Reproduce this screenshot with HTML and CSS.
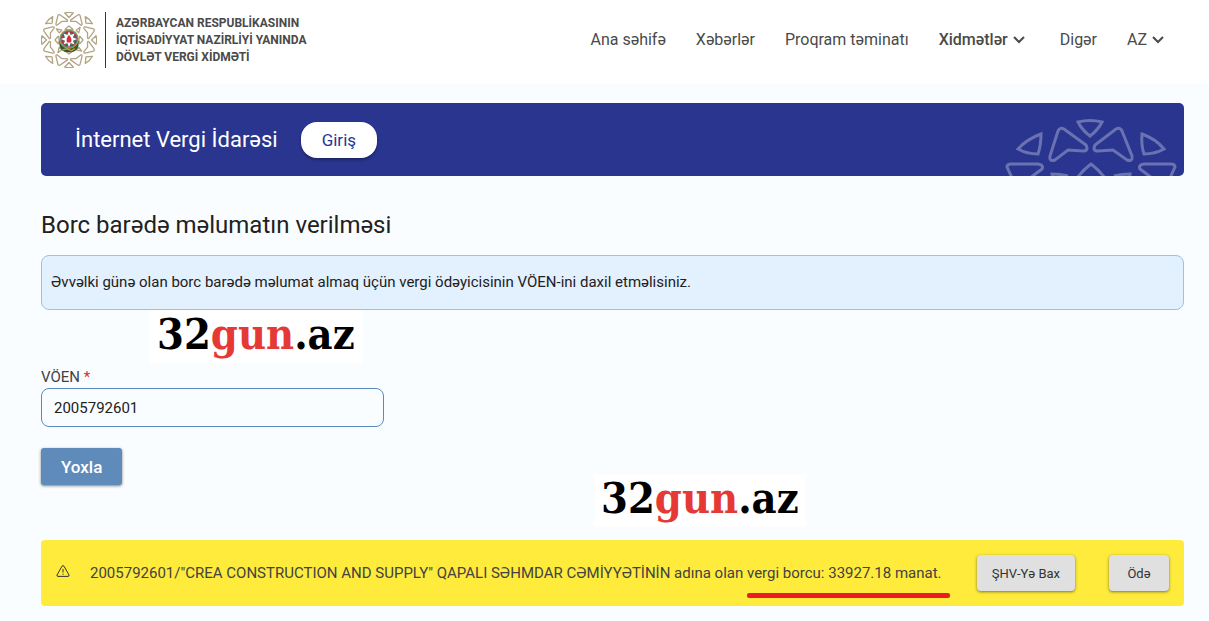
FILE: index.html
```
<!DOCTYPE html>
<html lang="az">

<head>
    <meta charset="UTF-8">
    <meta name="viewport" content="width=device-width, initial-scale=1.0">
    <title>Borc barədə məlumatın verilməsi</title>
    <link rel="stylesheet" href="styles.css">
</head>

<body>
    <header class="header">
        <a href="#" class="logo">
            <svg class="emblem" viewBox="-86 -86 172 172" aria-hidden="true">
                <defs>
                    <g id="quarter">
                        <path d="M-13-83Q0-87 13-83L0-69Z" />
                        <path d="M-34-75Q-31-80-26-76L-5-61Q-3-57-8-57L-22-57L-36-46Q-41-44-40-50Z" />
                        <path d="M34-75Q31-80 26-76L5-61Q3-57 8-57L22-57L36-46Q41-44 40-50Z" />
                        <path d="M-50-72L-52-52L-72-50Q-65-64-50-72Z" />
                        <path d="M0-43L-12-33L0-30L12-33Z" />
                        <path d="M-39-34L-22-30L-30-22Z" />
                    </g>
                </defs>
                <g fill="none" stroke="#b0a482" stroke-width="4" stroke-linejoin="round">
                    <use href="#quarter" />
                    <use href="#quarter" transform="rotate(90)" />
                    <use href="#quarter" transform="rotate(180)" />
                    <use href="#quarter" transform="rotate(270)" />
                </g>
                <path d="M-30 2Q-32 38 0 38Q32 38 30 2Z" fill="#2f5a2c" />
                <path d="M-20 30L-6 27L8 33L18 26" fill="none" stroke="#c9a13b" stroke-width="4" />
                <circle cy="-3" r="30" fill="#b99a42" />
                <circle cy="-3" r="27" fill="#3c8fae" />
                <circle cy="-3" r="24" fill="#c6283c" />
                <circle cy="-3" r="20" fill="#397d4b" />
                <path d="M0-27L5-15L17-20L12-8L25-3L12 2L17 14L5 9L0 22L-5 9L-17 14L-12 2L-25-3L-12-8L-17-20L-5-15Z" fill="#fff" />
                <path d="M0-16Q11-3 6 8H-6Q-11-3 0-16Z" fill="#dc2945" />
            </svg>
            <span class="logo-text">AZƏRBAYCAN RESPUBLİKASININ<br>İQTİSADİYYAT NAZİRLİYİ YANINDA<br>DÖVLƏT VERGİ XİDMƏTİ</span>
        </a>
        <nav class="nav">
            <a href="#">Ana səhifə</a>
            <a href="#">Xəbərlər</a>
            <a href="#">Proqram təminatı</a>
            <a href="#" class="active">Xidmətlər
                <svg class="chevron" viewBox="0 0 12 8"><path d="M1 1L6 6L11 1" /></svg>
            </a>
            <a href="#">Digər</a>
            <a href="#">AZ
                <svg class="chevron" viewBox="0 0 12 8"><path d="M1 1L6 6L11 1" /></svg>
            </a>
        </nav>
    </header>

    <main class="content">
        <section class="banner">
            <h2>İnternet Vergi İdarəsi</h2>
            <button type="button" class="login-btn">Giriş</button>
            <svg class="ornament" viewBox="0 0 184 73" aria-hidden="true">
                <path d="M78 19Q90 16 102 19Q98 27 90 33Q82 27 78 19Z" />
                <path d="M58 28Q60 24 64 26L86 42Q89 48 83 48L68 47L55 57Q49 59 50 53Z" />
                <path d="M122 28Q120 24 116 26L95 42Q92 48 98 48L113 47L127 57Q133 59 132 53Z" />
                <path d="M41 31Q27 36 18 46Q27 51 38 51Q41 42 41 31Z" />
                <path d="M142 31Q156 36 164 46Q155 51 144 51Q141 42 142 31Z" />
                <path d="M12 75L7 64Q7 61 11 61L38 61Q44 62 42 66L30 75" />
                <path d="M170 75L175 64Q175 61 171 61L144 61Q138 62 140 66L152 75" />
                <path d="M77 75Q83 67 91 61Q99 67 105 75" />
                <path d="M53 76L52 71Q60 71 68 73" />
                <path d="M129 76L130 71Q122 71 114 73" />
            </svg>
        </section>

        <h1>Borc barədə məlumatın verilməsi</h1>
        <div class="info">Əvvəlki günə olan borc barədə məlumat almaq üçün vergi ödəyicisinin VÖEN-ini daxil etməlisiniz.</div>

        <form class="debt-form">
            <div class="mark mark-top">32<b>gun</b>.az</div>
            <label for="voen">VÖEN <span class="required">*</span></label>
            <input type="text" id="voen" value="2005792601">
            <button type="button" class="check-btn">Yoxla</button>
            <div class="mark mark-bottom">32<b>gun</b>.az</div>
        </form>

        <section class="result">
            <svg class="warning" viewBox="0 0 14 12" aria-hidden="true">
                <path d="M6 1.2Q7 0 8 1.2L13 10Q13.300 11.400 12 11.400H2Q.700 11.400 1 10ZM7 4V7.500M7 8.700V9.800" />
            </svg>
            <p>2005792601/"CREA CONSTRUCTION AND SUPPLY" QAPALI SƏHMDAR CƏMİYYƏTİNİN adına olan <span class="debt">vergi borcu: 33927.18 manat.</span></p>
            <div class="result-actions">
                <button type="button">ŞHV-Yə Bax</button>
                <button type="button">Ödə</button>
            </div>
        </section>
    </main>
</body>

</html>
```
FILE: styles.css
```
* {
    margin: 0;
    padding: 0;
    box-sizing: border-box;
}

body {
    font-family: Roboto, "Liberation Sans", sans-serif;
    font-size: 15px;
    background-color: #fafdff;
    color: #212121;
}

button,
input {
    font-family: inherit;
}

button {
    border: none;
    cursor: pointer;
}

a {
    color: inherit;
    text-decoration: none;
}

.header {
    display: flex;
    align-items: center;
    justify-content: space-between;
    padding: 12px 45px 16px 41px;
    background-color: #fff;
    color: #4a4a4a;
}

.logo {
    display: flex;
    align-items: center;
}

.emblem {
    width: 56px;
    height: 56px;
}

.logo-text {
    margin-left: 8px;
    padding: 3px 0 2px 10px;
    border-left: 1px solid #333;
    font-size: 12px;
    line-height: 17px;
    font-weight: 700;
}

.nav {
    display: flex;
    gap: 30px;
    font-size: 16px;
    line-height: 20px;
}

.nav a {
    display: flex;
    align-items: center;
    gap: 5px;
}

.nav .active {
    font-weight: 500;
    margin-right: 5px;
}

.chevron {
    width: 12px;
    height: 8px;
    fill: none;
    stroke: #4a4a4a;
    stroke-width: 2;
}

.content {
    padding: 19px 25px 15px 41px;
}

.banner {
    display: flex;
    align-items: center;
    height: 73px;
    padding-left: 34px;
    background-color: #2a3590;
    border-radius: 5px;
    color: #fff;
}

.banner h2 {
    font-size: 22px;
    font-weight: 400;
}

.login-btn {
    height: 36px;
    margin-left: 23px;
    padding: 0 21px;
    border-radius: 16px;
    background-color: #fff;
    box-shadow: 0 2px 3px rgba(0, 0, 0, 0.3);
    color: #2a3590;
    font-size: 17px;
}

.ornament {
    width: 184px;
    height: 73px;
    margin-left: auto;
    fill: none;
    stroke: #6a72b1;
    stroke-width: 3;
}

h1 {
    margin: 34px 0 15px;
    font-size: 24px;
    line-height: 30px;
    font-weight: 400;
}

.info {
    padding: 17px 9px 18px;
    border: 1px solid #90c4f5;
    border-radius: 8px;
    background-color: #e3f0fe;
    line-height: 18px;
}

.debt-form {
    position: relative;
    display: flex;
    flex-direction: column;
    align-items: flex-start;
    padding: 58px 0 55px;
}

.debt-form label {
    line-height: 18px;
    margin-bottom: 2px;
    color: #424242;
}

.required {
    color: #d32f2f;
}

.debt-form input {
    width: 30%;
    height: 39px;
    padding: 0 12px;
    border: 1px solid #5c8abc;
    border-radius: 8px;
    background-color: transparent;
    color: #212121;
    font-size: 15px;
}

.check-btn {
    height: 37px;
    margin-top: 21px;
    padding: 0 20px;
    border-radius: 3px;
    background-color: #5f8bbb;
    box-shadow: 0 1px 3px rgba(0, 0, 0, 0.5);
    color: #fff;
    font-size: 17px;
    font-weight: 500;
}

/* Watermarks lie over the form */
.mark {
    position: absolute;
    padding: 0 7px 4px;
    background-color: #fff;
    color: #000;
    font-family: "DejaVu Serif Condensed", "DejaVu Serif", serif;
    font-size: 43px;
    line-height: 49px;
    font-weight: 700;
}

.mark b {
    color: #e53935;
}

.mark-top {
    top: 0;
    left: 109px;
}

.mark-bottom {
    bottom: 13px;
    left: 553px;
}

.result {
    display: flex;
    align-items: center;
    padding: 15px;
    border-radius: 4px;
    background-color: #ffeb3b;
    color: #424242;
}

.warning {
    width: 14px;
    height: 12px;
    margin: 0 20px 4px 0;
    fill: none;
    stroke: #333;
}

.debt {
    position: relative;
}

.debt::after {
    content: "";
    position: absolute;
    left: 0;
    right: -8px;
    bottom: -16px;
    height: 5px;
    border-radius: 2px;
    background-color: #ed1c24;
}

.result-actions {
    display: flex;
    gap: 34px;
    margin-left: auto;
}

.result-actions button {
    min-width: 60px;
    height: 36px;
    padding: 0 15px;
    border-radius: 4px;
    background-color: #e0e0e0;
    box-shadow: 0 1px 3px rgba(0, 0, 0, 0.5);
    color: #333;
    font-size: 13px;
}
```
